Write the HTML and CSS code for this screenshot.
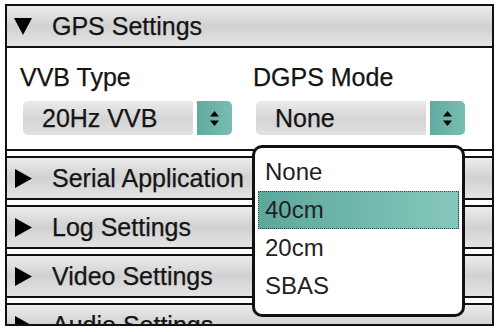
FILE: index.html
```html
<!DOCTYPE html>
<html lang="en">
<head>
    <meta charset="UTF-8">
    <meta name="viewport" content="width=device-width, initial-scale=1.0">
    <title>Settings</title>
    <link rel="stylesheet" href="styles.css">
</head>
<body>
    <div class="panel">
        <!-- GPS, aperto -->
        <section class="group open">
            <div class="group-head">
                <svg class="caret" width="18" height="17" viewBox="0 0 18 17"><polygon points="0,0 18,0 9,17" fill="#000"/></svg>
                <span>GPS Settings</span>
            </div>
            <div class="group-body">
                <div class="field">
                    <label>VVB Type</label>
                    <div class="select">
                        <span class="select-value">20Hz VVB</span>
                        <span class="select-btn">
                            <svg width="9" height="15" viewBox="0 0 9 15"><polygon points="0,5.5 4.5,0 9,5.5" fill="#000"/><polygon points="0,9.5 9,9.5 4.5,15" fill="#000"/></svg>
                        </span>
                    </div>
                </div>
                <div class="field">
                    <label>DGPS Mode</label>
                    <div class="select">
                        <span class="select-value">None</span>
                        <span class="select-btn">
                            <svg width="9" height="15" viewBox="0 0 9 15"><polygon points="0,5.5 4.5,0 9,5.5" fill="#000"/><polygon points="0,9.5 9,9.5 4.5,15" fill="#000"/></svg>
                        </span>
                    </div>
                </div>
            </div>
        </section>

        <!-- Sezioni chiuse -->
        <section class="group">
            <div class="group-head">
                <svg class="caret" width="18" height="19" viewBox="0 0 18 19"><polygon points="1,0 18,9.5 1,19" fill="#000"/></svg>
                <span>Serial Application</span>
            </div>
        </section>
        <section class="group">
            <div class="group-head">
                <svg class="caret" width="18" height="19" viewBox="0 0 18 19"><polygon points="1,0 18,9.5 1,19" fill="#000"/></svg>
                <span>Log Settings</span>
            </div>
        </section>
        <section class="group">
            <div class="group-head">
                <svg class="caret" width="18" height="19" viewBox="0 0 18 19"><polygon points="1,0 18,9.5 1,19" fill="#000"/></svg>
                <span>Video Settings</span>
            </div>
        </section>
        <section class="group">
            <div class="group-head">
                <svg class="caret" width="18" height="19" viewBox="0 0 18 19"><polygon points="1,0 18,9.5 1,19" fill="#000"/></svg>
                <span>Audio Settings</span>
            </div>
        </section>

        <!-- Menu a tendina di DGPS Mode -->
        <ul class="dropdown">
            <li>None</li>
            <li class="active">40cm</li>
            <li>20cm</li>
            <li>SBAS</li>
        </ul>
    </div>
</body>
</html>
```

FILE: styles.css
```css
body {
    margin: 0;
    background-color: #fff;
    font-family: 'Liberation Sans', Arial, sans-serif;
    color: #141414;
}

.panel {
    position: relative;
    margin: 4px 0 0 5px;
    width: 489px;
    height: 322px;
    box-sizing: border-box;
    border: 2px solid #111;
    overflow: hidden;
}

.group-head {
    height: 40px;
    display: flex;
    align-items: center;
    padding-left: 7px;
    background: linear-gradient(#ececec, #d1d1d1 50%, #e4e4e4);
    font-size: 25px;
    white-space: nowrap;
    -webkit-text-stroke: 0.25px #141414;
}

.caret {
    width: 18px;
    margin-right: 20px;
    flex-shrink: 0;
}

.group.open .group-head {
    border-bottom: 2px solid #111;
}

.group + .group {
    margin-top: 5px;
    border-top: 2px solid #111;
    border-bottom: 2px solid #111;
}

.group-body {
    display: flex;
    height: 103px;
    box-sizing: border-box;
    padding: 15px 0 0 13px;
    border-bottom: 2px solid #111;
}

.field {
    width: 233px;
}

.field label {
    display: block;
    font-size: 25px;
    line-height: 29px;
    -webkit-text-stroke: 0.25px #141414;
}

.select {
    display: flex;
    height: 34px;
    margin: 9px 0 0 3px;
}

.select-value {
    width: 170px;
    box-sizing: border-box;
    padding-left: 19px;
    border-radius: 5px 0 0 5px;
    background: linear-gradient(#ebebeb, #d4d4d4 55%, #e2e2e2);
    font-size: 25px;
    line-height: 34px;
    -webkit-text-stroke: 0.25px #141414;
}

.select-btn {
    width: 35px;
    margin-left: 4px;
    display: flex;
    align-items: center;
    justify-content: center;
    border-radius: 0 5px 5px 0;
    background: linear-gradient(90deg, #5fab9f, #78bdb2);
}

.dropdown {
    position: absolute;
    left: 245px;
    top: 139px;
    width: 213px;
    height: 172px;
    box-sizing: border-box;
    margin: 0;
    padding: 5px 3px;
    list-style: none;
    background-color: #fff;
    border: 3px solid #111;
    border-radius: 10px;
    z-index: 2;
}

.dropdown li {
    height: 38px;
    box-sizing: border-box;
    padding-left: 6px;
    border: 1px solid transparent;
    font-size: 24px;
    line-height: 35px;
    color: #222;
}

.dropdown li.active {
    background: linear-gradient(90deg, #5ca89c, #86c7bb);
    border: 1px dotted #2d4f49;
}
```
